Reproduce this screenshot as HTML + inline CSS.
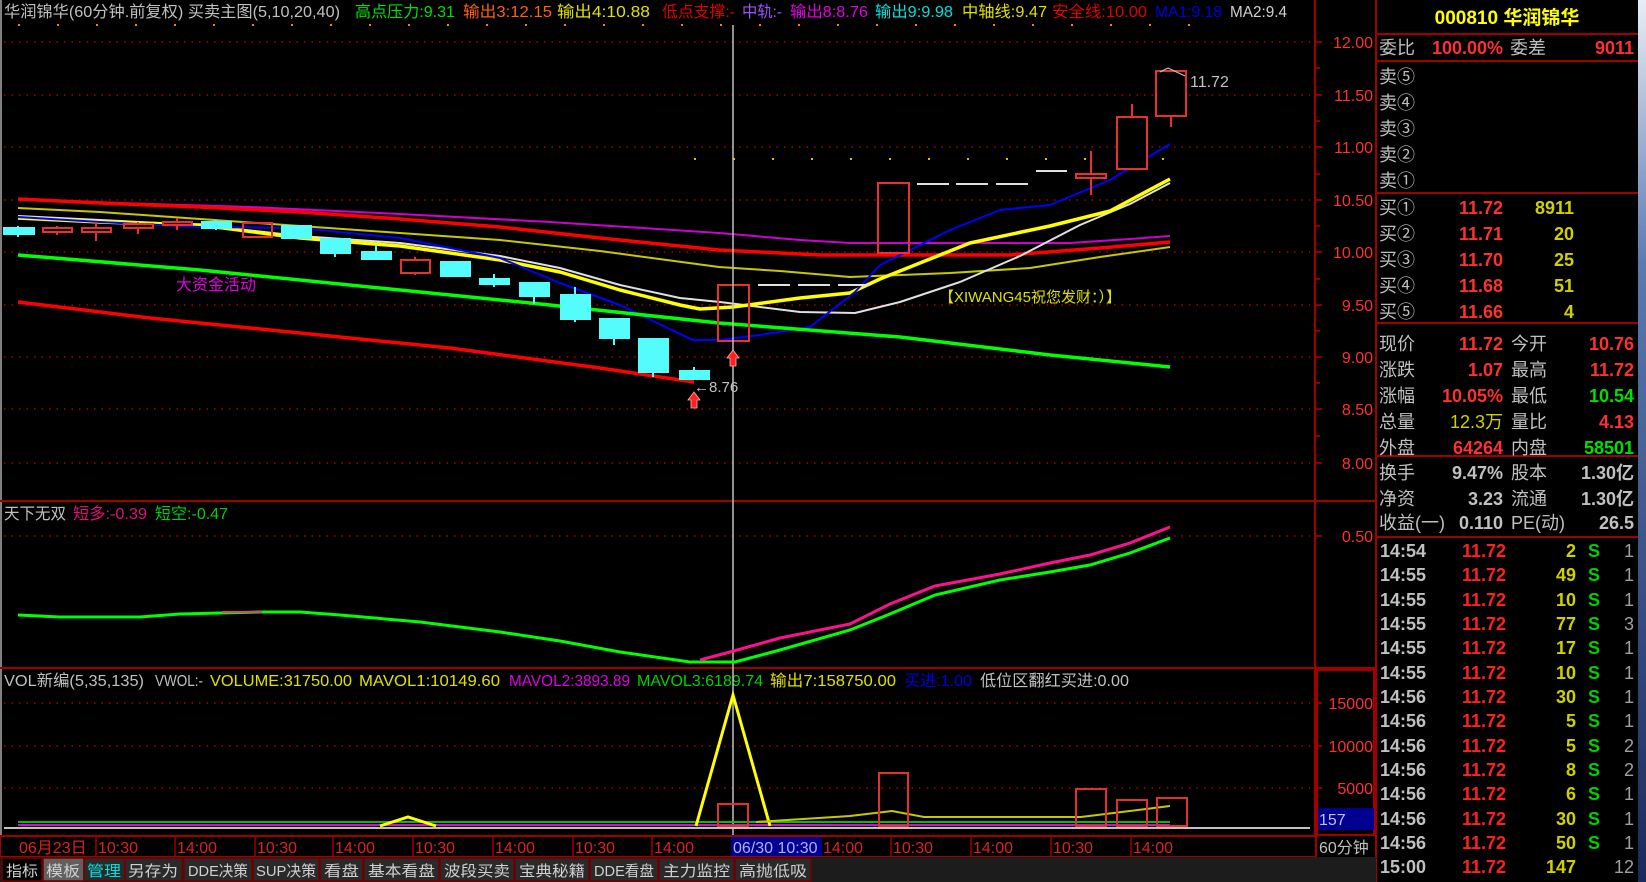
<!DOCTYPE html>
<html><head><meta charset="utf-8"><style>
html,body{margin:0;padding:0;background:#000;width:1646px;height:882px;overflow:hidden}
svg{display:block}
text{font-family:"Liberation Sans","Noto Sans CJK SC","WenQuanYi Zen Hei",sans-serif}
.h{font-size:16px}
.r{font-size:18px;font-weight:bold}
.ax{font-size:16px;fill:#ff3030}
</style></head><body>
<svg width="1646" height="882" viewBox="0 0 1646 882" xmlns="http://www.w3.org/2000/svg">
<rect width="1646" height="882" fill="#000"/>
<defs><linearGradient id="bs" x1="0" y1="0" x2="0" y2="1"><stop offset="0" stop-color="#e8eef6"/><stop offset="0.3" stop-color="#5a7ab0"/><stop offset="1" stop-color="#1a2a5a"/></linearGradient></defs>
<rect x="1638" y="0" width="8" height="882" fill="url(#bs)"/>
<line x1="1" y1="0" x2="1" y2="836" stroke="#808080" stroke-width="2"/>
<g stroke="#a00000" stroke-width="2">
<line x1="0" y1="501" x2="1376" y2="501"/>
<line x1="0" y1="668" x2="1376" y2="668"/>
<line x1="1315" y1="0" x2="1315" y2="836"/>
<line x1="1376" y1="0" x2="1376" y2="882"/>
<line x1="1376" y1="34" x2="1638" y2="34"/>
<line x1="1376" y1="61" x2="1638" y2="61"/>
<line x1="1376" y1="193" x2="1638" y2="193"/>
<line x1="1376" y1="323" x2="1638" y2="323"/>
<line x1="1376" y1="456" x2="1638" y2="456"/>
<line x1="1376" y1="537" x2="1638" y2="537"/>
</g>
<g stroke="#b00000" stroke-width="1.5" stroke-dasharray="1.5 6">
<line x1="4" y1="42" x2="1310" y2="42"/><line x1="4" y1="95" x2="1310" y2="95"/><line x1="4" y1="147" x2="1310" y2="147"/><line x1="4" y1="200" x2="1310" y2="200"/><line x1="4" y1="252" x2="1310" y2="252"/><line x1="4" y1="305" x2="1310" y2="305"/><line x1="4" y1="357" x2="1310" y2="357"/><line x1="4" y1="409" x2="1310" y2="409"/><line x1="4" y1="463" x2="1310" y2="463"/>
<line x1="4" y1="536" x2="1310" y2="536"/>
<line x1="4" y1="703" x2="1310" y2="703"/><line x1="4" y1="746" x2="1310" y2="746"/><line x1="4" y1="788" x2="1310" y2="788"/>
</g>
<g stroke="#ff8000" stroke-width="2" stroke-dasharray="2 37"><line x1="18" y1="25" x2="1200" y2="25"/></g>
<g stroke="#c8c800" stroke-width="2" stroke-dasharray="2 37"><line x1="694" y1="159" x2="1200" y2="159"/></g>
<g stroke="#b00000" stroke-width="1.5">
<line x1="1315" y1="42" x2="1322" y2="42"/><line x1="1315" y1="68" x2="1320" y2="68"/><line x1="1315" y1="95" x2="1322" y2="95"/><line x1="1315" y1="121" x2="1320" y2="121"/><line x1="1315" y1="147" x2="1322" y2="147"/><line x1="1315" y1="174" x2="1320" y2="174"/><line x1="1315" y1="200" x2="1322" y2="200"/><line x1="1315" y1="226" x2="1320" y2="226"/><line x1="1315" y1="252" x2="1322" y2="252"/><line x1="1315" y1="279" x2="1320" y2="279"/><line x1="1315" y1="305" x2="1322" y2="305"/><line x1="1315" y1="331" x2="1320" y2="331"/><line x1="1315" y1="357" x2="1322" y2="357"/><line x1="1315" y1="383" x2="1320" y2="383"/><line x1="1315" y1="409" x2="1322" y2="409"/><line x1="1315" y1="436" x2="1320" y2="436"/><line x1="1315" y1="463" x2="1322" y2="463"/>
<line x1="1315" y1="536" x2="1322" y2="536"/><line x1="1315" y1="703" x2="1322" y2="703"/><line x1="1315" y1="746" x2="1322" y2="746"/><line x1="1315" y1="788" x2="1322" y2="788"/>
</g>
<rect x="1317" y="670" width="57" height="165" fill="none" stroke="#a00000" stroke-width="2"/>
<g class="ax" text-anchor="end">
<text x="1373" y="48">12.00</text><text x="1373" y="101">11.50</text><text x="1373" y="153">11.00</text><text x="1373" y="206">10.50</text><text x="1373" y="258">10.00</text><text x="1373" y="311">9.50</text><text x="1373" y="363">9.00</text><text x="1373" y="415">8.50</text><text x="1373" y="469">8.00</text>
<text x="1373" y="542">0.50</text><text x="1373" y="709">15000</text><text x="1373" y="752">10000</text><text x="1373" y="794">5000</text>
</g>
<rect x="1318" y="808" width="56" height="22" fill="#000090"/>
<text x="1319" y="825" style="font-size:16px" fill="#c0c0ff">157</text>
<text x="1319" y="853" style="font-size:16px" fill="#c0c0c0">60分钟</text>

<g class="h">
<text x="4" y="17" fill="#c0c0c0" textLength="336" lengthAdjust="spacingAndGlyphs">华润锦华(60分钟.前复权) 买卖主图(5,10,20,40)</text>
<text x="355" y="17" fill="#00e000" textLength="100" lengthAdjust="spacingAndGlyphs">高点压力:9.31</text>
<text x="463" y="17" fill="#ff6010" textLength="89" lengthAdjust="spacingAndGlyphs">输出3:12.15</text>
<text x="557" y="17" fill="#e0e000" textLength="93" lengthAdjust="spacingAndGlyphs">输出4:10.88</text>
<text x="662" y="17" fill="#e00000" textLength="73" lengthAdjust="spacingAndGlyphs">低点支撑:-</text>
<text x="742" y="17" fill="#a050ff" textLength="40" lengthAdjust="spacingAndGlyphs">中轨:-</text>
<text x="790" y="17" fill="#e000e0" textLength="78" lengthAdjust="spacingAndGlyphs">输出8:8.76</text>
<text x="875" y="17" fill="#00e0e0" textLength="78" lengthAdjust="spacingAndGlyphs">输出9:9.98</text>
<text x="962" y="17" fill="#e0e000" textLength="85" lengthAdjust="spacingAndGlyphs">中轴线:9.47</text>
<text x="1052" y="17" fill="#e00000" textLength="95" lengthAdjust="spacingAndGlyphs">安全线:10.00</text>
<text x="1155" y="17" fill="#0000e0" textLength="67" lengthAdjust="spacingAndGlyphs">MA1:9.18</text>
<text x="1230" y="17" fill="#d0d0d0" textLength="57" lengthAdjust="spacingAndGlyphs">MA2:9.4</text>
<text x="4" y="519" fill="#c0c0c0" textLength="62" lengthAdjust="spacingAndGlyphs">天下无双</text>
<text x="73" y="519" fill="#e0107a" textLength="74" lengthAdjust="spacingAndGlyphs">短多:-0.39</text>
<text x="155" y="519" fill="#00d000" textLength="73" lengthAdjust="spacingAndGlyphs">短空:-0.47</text>
<text x="4" y="686" fill="#c0c0c0" textLength="140" lengthAdjust="spacingAndGlyphs">VOL新编(5,35,135)</text>
<text x="155" y="686" fill="#c0c0c0" textLength="48" lengthAdjust="spacingAndGlyphs">VWOL:-</text>
<text x="210" y="686" fill="#e0e000" textLength="142" lengthAdjust="spacingAndGlyphs">VOLUME:31750.00</text>
<text x="359" y="686" fill="#e0e000" textLength="141" lengthAdjust="spacingAndGlyphs">MAVOL1:10149.60</text>
<text x="509" y="686" fill="#e000e0" textLength="121" lengthAdjust="spacingAndGlyphs">MAVOL2:3893.89</text>
<text x="637" y="686" fill="#00d000" textLength="126" lengthAdjust="spacingAndGlyphs">MAVOL3:6189.74</text>
<text x="770" y="686" fill="#e0e000" textLength="126" lengthAdjust="spacingAndGlyphs">输出7:158750.00</text>
<text x="904" y="686" fill="#0000e0" textLength="68" lengthAdjust="spacingAndGlyphs">买进:1.00</text>
<text x="980" y="686" fill="#c0c0c0" textLength="149" lengthAdjust="spacingAndGlyphs">低位区翻红买进:0.00</text>
</g>

<g fill="none" stroke-linejoin="round">
<polyline stroke="#d000d0" stroke-width="2" points="18,199 120,203 250,207 400,214 550,222 719,233 800,240 850,243 1070,243 1130,239 1170,236"/>
<polyline stroke="#c8c800" stroke-width="2" points="18,208 100,212 200,219 300,226 400,233 500,240 600,251 719,267 780,271 850,277 950,273 1030,268 1100,257 1170,247"/>
<polyline stroke="#ff0000" stroke-width="3.5" points="18,199 100,203 200,207 300,212 400,219 500,227 600,238 719,250 780,253 820,255 1010,255 1100,248 1170,242"/>
<polyline stroke="#e0e0e0" stroke-width="2" points="18,216 100,220 200,225 300,236 400,243 500,256 560,268 620,285 680,298 720,302 760,307 800,312 855,313 900,302 960,282 1020,256 1080,225 1130,204 1170,183"/>
<polyline stroke="#ffff00" stroke-width="3.5" points="18,218 100,222 200,225 300,238 400,246 500,260 560,272 620,290 680,305 700,309 733,307 800,298 850,293 880,279 970,243 1050,226 1110,211 1170,179"/>
<polyline stroke="#0000ff" stroke-width="2" points="18,217 100,222 200,227 300,228 400,238 500,258 560,283 620,305 680,334 693,340 720,340 760,335 810,327 855,292 880,265 950,230 1000,210 1050,205 1110,180 1170,144"/>
<polyline stroke="#00ff00" stroke-width="3.5" points="18,255 200,270 400,290 550,305 719,323 900,337 1050,355 1170,367"/>
<polyline stroke="#ff0000" stroke-width="3.5" points="18,302 150,318 300,333 450,348 600,368 694,382"/>
</g>
<g stroke="#e0e0e0" stroke-width="2">
<line x1="758" y1="285" x2="790" y2="285"/><line x1="798" y1="285" x2="830" y2="285"/><line x1="838" y1="285" x2="870" y2="285"/>
<line x1="917" y1="184" x2="949" y2="184"/><line x1="956" y1="184" x2="988" y2="184"/><line x1="996" y1="184" x2="1028" y2="184"/>
<line x1="1036" y1="171" x2="1067" y2="171"/>
</g>
<g stroke-width="2">
<g stroke="#54fcfc" fill="#54fcfc">
<line x1="18" y1="226" x2="18" y2="237"/><rect x="4" y="228" width="30" height="6"/>
<line x1="216" y1="220" x2="216" y2="230"/><rect x="202" y="222" width="29" height="6"/>
<rect x="282" y="226" width="29" height="12"/>
<line x1="335" y1="239" x2="335" y2="257"/><rect x="321" y="239" width="29" height="14"/>
<line x1="376" y1="245" x2="376" y2="259"/><rect x="362" y="252" width="29" height="7"/>
<rect x="441" y="262" width="29" height="14"/>
<line x1="494" y1="274" x2="494" y2="287"/><rect x="480" y="279" width="29" height="5"/>
<line x1="534" y1="283" x2="534" y2="304"/><rect x="520" y="283" width="29" height="13"/>
<line x1="575" y1="287" x2="575" y2="322"/><rect x="561" y="295" width="29" height="24"/>
<line x1="614" y1="319" x2="614" y2="345"/><rect x="600" y="319" width="29" height="19"/>
<line x1="653" y1="339" x2="653" y2="377"/><rect x="639" y="339" width="29" height="33"/>
<line x1="694" y1="367" x2="694" y2="379"/><rect x="680" y="371" width="29" height="8"/>
</g>
<g stroke="#e83030" fill="none">
<line x1="57" y1="226" x2="57" y2="235"/><rect x="43" y="228" width="29" height="4" fill="#000"/>
<line x1="96" y1="222" x2="96" y2="241"/><rect x="82" y="228" width="29" height="4" fill="#000"/>
<line x1="138" y1="222" x2="138" y2="234"/><rect x="124" y="224" width="29" height="4" fill="#000"/>
<line x1="177" y1="218" x2="177" y2="230"/><rect x="163" y="222" width="29" height="3" fill="#000"/>
<rect x="243" y="223" width="29" height="14"/>
<line x1="415" y1="257" x2="415" y2="275"/><rect x="401" y="260" width="29" height="13" fill="#000"/>
<rect x="718" y="285" width="31" height="56"/>
<rect x="878" y="183" width="31" height="70"/>
<line x1="1091" y1="151" x2="1091" y2="195"/><rect x="1076" y="174" width="30" height="4" fill="#000"/>
<line x1="1132" y1="104" x2="1132" y2="169"/><rect x="1117" y="117" width="30" height="52" fill="#000"/>
<line x1="1171" y1="116" x2="1171" y2="127"/><rect x="1156" y="71" width="30" height="45" fill="#000"/>
</g>
</g>
<line x1="733" y1="25" x2="733" y2="835" stroke="#c0c0c0" stroke-width="1.5"/>
<polygon points="694,392 700,400 697,400 697,408 691,408 691,400 688,400" fill="#ff2020" stroke="#ffb0b0" stroke-width="0.8"/>
<polygon points="733,350 739,358 736,358 736,366 730,366 730,358 727,358" fill="#ff2020" stroke="#ffb0b0" stroke-width="0.8"/>
<text x="694" y="392" style="font-size:15px" fill="#c0c0c0">←8.76</text>
<path d="M1160,72 L1168,68 L1185,76" fill="none" stroke="#c0c0c0" stroke-width="1.2"/>
<text x="1190" y="87" style="font-size:16px" fill="#c0c0c0">11.72</text>
<text x="176" y="290" style="font-size:16px" fill="#e000e0">大资金活动</text>
<text x="939" y="302" style="font-size:15px" fill="#e0e000">【XIWANG45祝您发财：）】</text>

<g fill="none" stroke-width="3">
<polyline stroke="#00ff00" points="18,615 60,617 140,617 180,614 260,612 300,612 340,615 420,622 500,632 560,641 620,652 690,662 735,662 780,650 850,630 890,614 935,595 1000,580 1050,572 1090,565 1130,553 1170,538"/>
<polyline stroke="#ff1090" points="700,660 730,652 780,638 850,624 890,604 935,586 1000,574 1050,563 1090,555 1130,543 1170,527"/>
<line x1="222" y1="612" x2="262" y2="612" stroke="#e04080" stroke-width="2"/>
</g>

<g fill="none">
<line x1="4" y1="828" x2="1310" y2="828" stroke="#c0c0c0" stroke-width="2"/>
<line x1="18" y1="825" x2="1170" y2="825" stroke="#e000e0" stroke-width="2"/>
<line x1="18" y1="822" x2="1170" y2="822" stroke="#00c000" stroke-width="2"/>
<polyline stroke="#ffff00" stroke-width="3" points="380,826 408,817 436,826"/>
<polyline stroke="#ffff00" stroke-width="3" points="696,826 733,695 770,826"/>
<polyline stroke="#c8c800" stroke-width="2" points="756,822 850,816 892,811 924,817 1081,817 1170,806"/>
<g stroke="#e03030" stroke-width="2">
<rect x="718" y="804" width="30" height="22"/>
<rect x="879" y="773" width="29" height="53"/>
<rect x="1076" y="789" width="30" height="37"/>
<rect x="1117" y="800" width="30" height="26"/>
<rect x="1157" y="798" width="30" height="28"/>
</g>
</g>

<rect x="0" y="836" width="1316" height="21" fill="#000" stroke="#a00000" stroke-width="2"/>
<g stroke="#a00000" stroke-width="1.5">
<line x1="96" y1="836" x2="96" y2="857"/><line x1="175" y1="836" x2="175" y2="857"/><line x1="255" y1="836" x2="255" y2="857"/><line x1="333" y1="836" x2="333" y2="857"/><line x1="413" y1="836" x2="413" y2="857"/><line x1="493" y1="836" x2="493" y2="857"/><line x1="573" y1="836" x2="573" y2="857"/><line x1="652" y1="836" x2="652" y2="857"/><line x1="891" y1="836" x2="891" y2="857"/><line x1="971" y1="836" x2="971" y2="857"/><line x1="1051" y1="836" x2="1051" y2="857"/><line x1="1131" y1="836" x2="1131" y2="857"/>
</g>
<g style="font-size:16px" fill="#e02020">
<text x="19" y="853">06月23日</text>
<text x="98" y="853">10:30</text><text x="177" y="853">14:00</text><text x="257" y="853">10:30</text><text x="335" y="853">14:00</text><text x="415" y="853">10:30</text><text x="495" y="853">14:00</text><text x="575" y="853">10:30</text><text x="654" y="853">14:00</text><text x="823" y="853">14:00</text><text x="893" y="853">10:30</text><text x="973" y="853">14:00</text><text x="1053" y="853">10:30</text><text x="1133" y="853">14:00</text>
</g>
<rect x="731" y="837" width="91" height="19" fill="#000090"/>
<text x="733" y="853" style="font-size:16px" fill="#b0b0ff">06/30 10:30</text>

<rect x="0" y="857" width="1376" height="25" fill="#1c1c1c"/>
<g stroke="#700000" stroke-width="1.5" fill="#2a2a2a">
<rect x="2" y="858" width="40" height="23" fill="#000"/>
<rect x="43" y="858" width="41" height="23" fill="#606060"/>
<rect x="84" y="858" width="41" height="23"/>
<rect x="125" y="858" width="57" height="23"/>
<rect x="184" y="858" width="68" height="23"/>
<rect x="253" y="858" width="66" height="23"/>
<rect x="320" y="858" width="43" height="23"/>
<rect x="364" y="858" width="75" height="23"/>
<rect x="440" y="858" width="74" height="23"/>
<rect x="515" y="858" width="74" height="23"/>
<rect x="590" y="858" width="68" height="23"/>
<rect x="659" y="858" width="75" height="23"/>
<rect x="735" y="858" width="76" height="23"/>
</g>
<g style="font-size:15px" fill="#d0d0d0">
<text x="6" y="876" textLength="32" lengthAdjust="spacingAndGlyphs">指标</text>
<text x="46" y="876" textLength="34" lengthAdjust="spacingAndGlyphs">模板</text>
<text x="87" y="876" fill="#00e0e0" textLength="34" lengthAdjust="spacingAndGlyphs">管理</text>
<text x="128" y="876" textLength="50" lengthAdjust="spacingAndGlyphs">另存为</text>
<text x="188" y="876" textLength="60" lengthAdjust="spacingAndGlyphs">DDE决策</text>
<text x="256" y="876" textLength="60" lengthAdjust="spacingAndGlyphs">SUP决策</text>
<text x="324" y="876" textLength="35" lengthAdjust="spacingAndGlyphs">看盘</text>
<text x="368" y="876" textLength="67" lengthAdjust="spacingAndGlyphs">基本看盘</text>
<text x="444" y="876" textLength="66" lengthAdjust="spacingAndGlyphs">波段买卖</text>
<text x="519" y="876" textLength="66" lengthAdjust="spacingAndGlyphs">宝典秘籍</text>
<text x="594" y="876" textLength="60" lengthAdjust="spacingAndGlyphs">DDE看盘</text>
<text x="663" y="876" textLength="67" lengthAdjust="spacingAndGlyphs">主力监控</text>
<text x="739" y="876" textLength="68" lengthAdjust="spacingAndGlyphs">高抛低吸</text>
</g>

<text x="1507" y="24" text-anchor="middle" class="r" fill="#ffff00" style="font-size:19px">000810 华润锦华</text>
<g class="r" fill="#c0c0c0" style="font-weight:normal">
<text x="1379" y="54">委比</text><text x="1510" y="54">委差</text>
<text x="1379" y="83">卖⑤</text><text x="1379" y="109">卖④</text><text x="1379" y="135">卖③</text><text x="1379" y="161">卖②</text><text x="1379" y="187">卖①</text>
<text x="1379" y="214">买①</text><text x="1379" y="240">买②</text><text x="1379" y="266">买③</text><text x="1379" y="292">买④</text><text x="1379" y="318">买⑤</text>
<text x="1379" y="350">现价</text><text x="1379" y="376">涨跌</text><text x="1379" y="402">涨幅</text><text x="1379" y="428">总量</text><text x="1379" y="454">外盘</text>
<text x="1511" y="350">今开</text><text x="1511" y="376">最高</text><text x="1511" y="402">最低</text><text x="1511" y="428">量比</text><text x="1511" y="454">内盘</text>
<text x="1379" y="479">换手</text><text x="1379" y="505">净资</text><text x="1379" y="529">收益(一)</text>
<text x="1511" y="479">股本</text><text x="1511" y="505">流通</text><text x="1511" y="529">PE(动)</text>
</g>
<g class="r" text-anchor="end">
<text x="1503" y="54" fill="#ff3030">100.00%</text><text x="1634" y="54" fill="#ff3030">9011</text>
<g fill="#ff3030"><text x="1503" y="214">11.72</text><text x="1503" y="240">11.71</text><text x="1503" y="266">11.70</text><text x="1503" y="292">11.68</text><text x="1503" y="318">11.66</text></g>
<g fill="#d0d000"><text x="1574" y="214">8911</text><text x="1574" y="240">20</text><text x="1574" y="266">25</text><text x="1574" y="292">51</text><text x="1574" y="318">4</text></g>
<text x="1503" y="350" fill="#ff3030">11.72</text><text x="1503" y="376" fill="#ff3030">1.07</text><text x="1503" y="402" fill="#ff3030">10.05%</text><text x="1503" y="428" fill="#d0d000" style="font-weight:normal">12.3万</text><text x="1503" y="454" fill="#ff3030">64264</text>
<text x="1634" y="350" fill="#ff3030">10.76</text><text x="1634" y="376" fill="#ff3030">11.72</text><text x="1634" y="402" fill="#00e000">10.54</text><text x="1634" y="428" fill="#ff3030">4.13</text><text x="1634" y="454" fill="#00e000">58501</text>
<g fill="#c0c0c0"><text x="1503" y="479">9.47%</text><text x="1503" y="505">3.23</text><text x="1503" y="529">0.110</text><text x="1634" y="479">1.30亿</text><text x="1634" y="505">1.30亿</text><text x="1634" y="529">26.5</text></g>
</g>
<g class="r">
<g fill="#c0c0c0"><text x="1380" y="557">14:54</text><text x="1380" y="581">14:55</text><text x="1380" y="606">14:55</text><text x="1380" y="630">14:55</text><text x="1380" y="654">14:55</text><text x="1380" y="679">14:55</text><text x="1380" y="703">14:56</text><text x="1380" y="727">14:56</text><text x="1380" y="752">14:56</text><text x="1380" y="776">14:56</text><text x="1380" y="800">14:56</text><text x="1380" y="825">14:56</text><text x="1380" y="849">14:56</text><text x="1380" y="873">15:00</text></g>
<g fill="#ff2020" text-anchor="end"><text x="1506" y="557">11.72</text><text x="1506" y="581">11.72</text><text x="1506" y="606">11.72</text><text x="1506" y="630">11.72</text><text x="1506" y="654">11.72</text><text x="1506" y="679">11.72</text><text x="1506" y="703">11.72</text><text x="1506" y="727">11.72</text><text x="1506" y="752">11.72</text><text x="1506" y="776">11.72</text><text x="1506" y="800">11.72</text><text x="1506" y="825">11.72</text><text x="1506" y="849">11.72</text><text x="1506" y="873">11.72</text></g>
<g fill="#d0d000" text-anchor="end"><text x="1576" y="557">2</text><text x="1576" y="581">49</text><text x="1576" y="606">10</text><text x="1576" y="630">77</text><text x="1576" y="654">17</text><text x="1576" y="679">10</text><text x="1576" y="703">30</text><text x="1576" y="727">5</text><text x="1576" y="752">5</text><text x="1576" y="776">8</text><text x="1576" y="800">6</text><text x="1576" y="825">30</text><text x="1576" y="849">50</text><text x="1576" y="873">147</text></g>
<g fill="#00d000"><text x="1588" y="557">S</text><text x="1588" y="581">S</text><text x="1588" y="606">S</text><text x="1588" y="630">S</text><text x="1588" y="654">S</text><text x="1588" y="679">S</text><text x="1588" y="703">S</text><text x="1588" y="727">S</text><text x="1588" y="752">S</text><text x="1588" y="776">S</text><text x="1588" y="800">S</text><text x="1588" y="825">S</text><text x="1588" y="849">S</text></g>
<g fill="#a0a0a0" text-anchor="end" style="font-weight:normal"><text x="1634" y="557">1</text><text x="1634" y="581">1</text><text x="1634" y="606">1</text><text x="1634" y="630">3</text><text x="1634" y="654">1</text><text x="1634" y="679">1</text><text x="1634" y="703">1</text><text x="1634" y="727">1</text><text x="1634" y="752">2</text><text x="1634" y="776">2</text><text x="1634" y="800">1</text><text x="1634" y="825">1</text><text x="1634" y="849">1</text><text x="1634" y="873">12</text></g>
</g>
</svg>
</body></html>
